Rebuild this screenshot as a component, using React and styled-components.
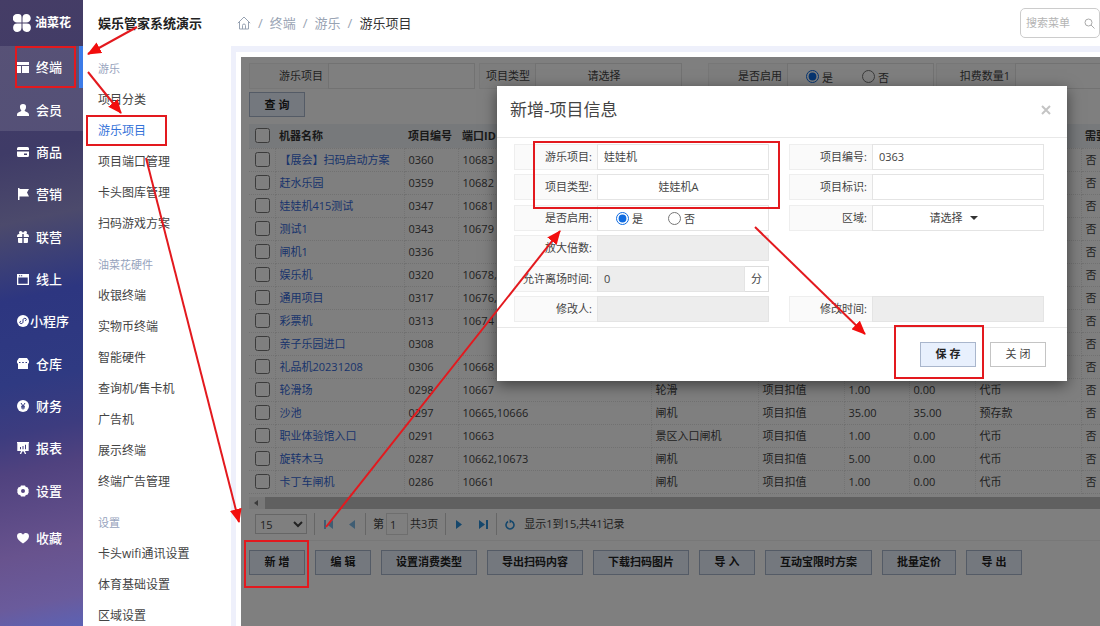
import React from 'react'
import styled, { createGlobalStyle, css } from 'styled-components'

const GlobalStyle = createGlobalStyle`
  * {
    box-sizing: border-box;
  }

  body {
    margin: 0;
    font-family: 'Open Sans', 'Noto Sans CJK SC', sans-serif;
    font-size: 11px;
    line-height: 16px;
    color: #444;
    background: #fff;
  }

  button, input, select {
    font: inherit;
    color: inherit;
    margin: 0;
  }

  a {
    color: inherit;
    text-decoration: none;
  }

  ul, h1, h2, h3 {
    margin: 0;
    padding: 0;
    list-style: none;
  }
`;

const Page = styled.div`
  position: relative;
  display: flex;
  height: 100vh;
  overflow: hidden;
`;

/* main navigation */

const Rail = styled.nav`
  flex: 0 0 83px;
  color: #fff;
  background: linear-gradient(
    168deg,
    #453d66 0%,
    #3f3b67 24%,
    #4c4a6c 35%,
    #2d3680 47%,
    #2f3a82 60%,
    #3d3c7f 68%,
    #50427f 74%,
    #68538e 87%,
    #6a5b9c 95%,
    #5c62b4 100%
  );
`;

const Logo = styled.div`
  display: flex;
  align-items: center;
  gap: 4px;
  height: 46px;
  padding-left: 13px;
  font-size: 12px;
  font-weight: 700;
`;

const RailList = styled.ul`
  display: flex;
  flex-direction: column;
  min-height: 466px;
`;

const RailItem = styled.li`
  flex: 1;
  display: flex;
  min-height: 42px;
  background: ${props => props.$lit ? 'rgba(255, 255, 255, 0.11)' : 'transparent'};
  border-right: 4px solid ${props => props.$active ? '#3c7be8' : 'transparent'};
  background-clip: ${props => props.$active ? 'padding-box' : 'border-box'};
`;

const RailLink = styled.a`
  flex: 1;
  display: flex;
  align-items: center;
  gap: ${props => props.$tight ? '1px' : '7px'};
  padding-left: 17px;
  font-size: 13px;
  font-weight: 500;
  white-space: nowrap;
`;

const Favourite = styled.div`
  display: flex;
  height: 42px;
  margin-top: 5px;
`;

/* second level menu */

const SubMenu = styled.nav`
  flex: 0 0 148px;
  padding-left: 15px;
  overflow: hidden;
  font-size: 12px;
  white-space: nowrap;
`;

const SystemName = styled.h1`
  height: 46px;
  margin-bottom: 7px;
  font-size: 13px;
  font-weight: 700;
  line-height: 46px;
  color: #222;
`;

const MenuGroup = styled.section`
  margin-bottom: 10px;
`;

const GroupTitle = styled.h2`
  font-size: 11px;
  font-weight: 400;
  line-height: 31px;
  color: #96a3bd;
`;

const MenuLink = styled.a`
  display: block;
  line-height: 31px;
  color: ${props => props.$active ? '#3573d9' : '#444'};
`;

/* content */

const Main = styled.main`
  flex: 1;
  min-width: 0;
  display: flex;
  flex-direction: column;
`;

const TopBar = styled.header`
  flex: 0 0 46px;
  display: flex;
  align-items: center;
  justify-content: space-between;
  padding-left: 6px;
`;

const Crumbs = styled.div`
  display: flex;
  align-items: center;
  gap: 7px;
  font-size: 13px;
  color: #98a3b3;

  strong {
    font-weight: 400;
    color: #333;
  }
`;

const SearchBox = styled.label`
  display: flex;
  align-items: center;
  width: 80px;
  height: 30px;
  padding: 0 4px 0 5px;
  border: 1px solid #ccc;
  border-radius: 5px;
  color: #aaa;

  input {
    flex: 1;
    min-width: 0;
    padding: 0;
    border: 0;
    outline: 0;
    background: none;
  }

  input::placeholder {
    color: #b4b4b4;
  }
`;

const Gutter = styled.div`
  flex: 1;
  display: flex;
  min-height: 0;
  padding: 6px 0 0 5px;
  background: #eef0fb;
`;

const Panel = styled.div`
  flex: 1;
  display: flex;
  min-width: 0;
  padding: 5px 0 0 5px;
  background: #fff;
`;

const Frame = styled.div`
  position: relative;
  flex: 1;
  min-width: 0;
  padding: 6px 0 0 8px;
  overflow: hidden;
`;

const Filters = styled.form`
  display: flex;
  height: 26px;
  margin-bottom: 3px;
`;

const FilterField = styled.div`
  flex: ${props => props.$grow ? '1 0 auto' : '0 0 auto'};
  display: flex;
  margin-right: ${props => props.$after || 0}px;
`;

const labelBox = css`
  flex: none;
  display: flex;
  align-items: center;
  justify-content: flex-end;
  padding-right: 5px;
  border: 1px solid #eee;
  border-right: 0;
  background: #fafafa;
  white-space: nowrap;
`;

const valueBox = css`
  border: 1px solid #e4e4e4;
  border-radius: 0;
  background: ${props => props.disabled ? '#ededed' : '#fff'};
  outline: 0;
`;

const FilterLabel = styled.label`
  ${labelBox}
  width: ${props => props.$narrow ? '56px' : '79px'};
`;

const FilterInput = styled.input`
  ${valueBox}
  width: 147px;
  padding: 0 6px;
`;

const DropButton = styled.button`
  ${valueBox}
  flex: ${props => props.$fill ? '1' : '0 0 147px'};
  display: flex;
  align-items: center;
  justify-content: center;
  gap: 7px;
  padding: 0 9px 0 0;
`;

const Caret = styled.span`
  border: 4px solid transparent;
  border-top-color: #333;
  border-bottom: 0;
`;

const RadioBox = styled.div`
  ${valueBox}
  flex: ${props => props.$fill ? '1' : '0 0 147px'};
  display: flex;
  align-items: center;
  gap: ${props => props.$fill ? '25px' : '29px'};
  padding: 3px 0 0 18px;

  label {
    display: flex;
    align-items: center;
    gap: 3px;
  }

  input {
    width: 13px;
    height: 13px;
    margin-bottom: 2px;
    accent-color: #0f6be0;
  }
`;

const Button = styled.button`
  flex: none;
  min-width: 56px;
  height: 25px;
  padding: 0 14px;
  border: 1px solid ${props => props.$plain ? '#c4c4c4' : '#a9b6cc'};
  border-radius: 0;
  background: ${props => props.$plain ? '#fff' : '#e8f0fd'};
  color: ${props => props.$plain ? '#444' : '#222'};
  font-weight: ${props => props.$plain ? 400 : 700};
  line-height: 22px;
  white-space: nowrap;
`;

const TableWrap = styled.div`
  margin-top: 7px;
  overflow: hidden;
`;

const Table = styled.table`
  width: 1000px;
  table-layout: fixed;
  border-collapse: collapse;

  th, td {
    height: 23px;
    padding: 0 4px;
    border-right: 1px dotted #e6e6e6;
    border-bottom: 1px dotted #e2e2e2;
    text-align: left;
    white-space: nowrap;
  }

  th {
    height: 24px;
    border-right: 0;
    background: #eff2f6;
    color: #333;
  }

  th:first-child, td:first-child {
    padding-left: 6px;
  }

  input {
    display: block;
    width: 15px;
    height: 15px;
  }

  a {
    color: #3468d8;
  }
`;

const ScrollBar = styled.div`
  display: flex;
  align-items: center;
  height: 12px;
  margin-top: 3px;
  background: #f1f1f1;

  i {
    margin: 0 7px 0 5px;
    border: 3px solid transparent;
    border-right: 4px solid #777;
    border-left: 0;
  }

  span {
    flex: 1;
    height: 12px;
    background: #c1c1c1;
  }
`;

const Pager = styled.div`
  display: flex;
  align-items: center;
  height: 32px;
  padding-left: 6px;
  border-bottom: 1px solid #f0f0f0;

  select {
    width: 52px;
    height: 20px;
    margin-right: 4px;
    border: 1px solid #ccc;
    background: #fff;
  }

  input {
    width: 22px;
    height: 22px;
    padding: 0 3px;
    border: 1px solid #ddd;
  }
`;

const PagerText = styled.span`
  display: flex;
  align-items: center;
  gap: 2px;
  padding: 0 4px;
`;

const Divider = styled.span`
  width: 1px;
  height: 22px;
  margin: 0 3px;
  background: #ccc;
`;

const PageButton = styled.button`
  display: flex;
  align-items: center;
  justify-content: center;
  width: 20px;
  height: 20px;
  padding: 0;
  border: 0;
  background: none;
  color: #2a8fd8;
  opacity: ${props => props.disabled ? 0.6 : 1};
`;

const PageNav = styled.div`
  display: flex;
  gap: 4px;
`;

const Actions = styled.div`
  display: flex;
  gap: 10px;
  margin-top: 9px;
`;

/* dialog */

const Overlay = styled.div`
  position: absolute;
  inset: 0;
  display: flex;
  justify-content: flex-end;
  align-items: flex-start;
  padding: 29px 33px 0 0;
  background: rgba(0, 0, 0, 0.5);
`;

const Dialog = styled.section`
  width: 570px;
  max-width: 100%;
  background: #fff;
  box-shadow: 0 4px 14px rgba(0, 0, 0, 0.5);
`;

const DialogHeader = styled.header`
  display: flex;
  align-items: center;
  justify-content: space-between;
  height: 52px;
  padding: 0 16px 4px 13px;
  border-bottom: 1px solid #e8e8e8;

  h3 {
    font-size: 17px;
    font-weight: 400;
    line-height: 24px;
  }
`;

const CloseButton = styled.button`
  display: flex;
  padding: 0;
  border: 0;
  background: none;
  color: #c4c4c4;
`;

const DialogForm = styled.form`
  display: grid;
  grid-template-columns: 1fr 1fr;
  grid-auto-rows: 26px;
  align-content: space-between;
  column-gap: 20px;
  min-height: 189px;
  padding: 6px 23px 5px 17px;
`;

const Field = styled.div`
  grid-column: ${props => props.$col};
  grid-row: ${props => props.$row};
  display: flex;
  min-width: 0;
`;

const FieldLabel = styled.label`
  ${labelBox}
  width: 83px;
`;

const FieldInput = styled.input`
  ${valueBox}
  flex: 1;
  min-width: 0;
  padding: 0 6px;
`;

const Unit = styled.span`
  width: 24px;
  border: 1px solid #ddd;
  border-left: 0;
  line-height: 24px;
  text-align: center;
`;

const DialogFooter = styled.footer`
  display: flex;
  align-items: center;
  justify-content: flex-end;
  gap: 14px;
  height: 54px;
  padding: 0 21px 1px 0;
  border-top: 1px solid #e8e8e8;
`;

const Marks = styled.svg`
  position: absolute;
  top: 0;
  left: 0;
  pointer-events: none;
`;

const icons = {
  terminal: <path d="M0 1h12v3H0zM0 5h4v7H0zM5 5h7v7H5z" />,
  member: <path d="M6 0a3 3 0 0 1 3 3.300C9 5 8 6 7.600 6.800c0 .8 4.400 1.200 4.400 4V12H0v-1.200C0 8 4.400 7.600 4.400 6.800 4 6 3 5 3 3.300A3 3 0 0 1 6 0z" />,
  goods: <path fillRule="evenodd" d="M1.500 1h9A1.500 1.500 0 0 1 12 2.500V4H0V2.500A1.500 1.500 0 0 1 1.500 1zM0 5.500h12v4a1.500 1.500 0 0 1-1.500 1.500h-9A1.500 1.500 0 0 1 0 9.500zM7 7.500V9h3V7.500z" />,
  flag: <path d="M1 0h1.500v1H12L10 4.500 12 8.500H2.500V12H1z" />,
  gift: <path d="M3.500 0C5 0 5.500 1 6 2c.5-1 1-2 2.500-2C10 0 10.500 2 9.500 3H10c1.500 0 2 1 2 3H6.700V3H5.300v3H0c0-2 .5-3 2-3h.5C1.500 2 2 0 3.500 0zM1 7h4.300v5H2.500C1.500 12 1 11.500 1 10.500zM6.700 7H11v3.500c0 1-.5 1.500-1.500 1.500H6.700z" />,
  online: <path fillRule="evenodd" d="M0 1h12v11H0zM1.300 4.500v6.200h9.400V4.500zM2 2.200v1h1.200v-1zM4 2.200v1h1.200v-1z" />,
  mini: (
    <>
      <circle cx="6" cy="6" r="6" />
      <path d="M3.800 8.600c-1.600-.3-1.300-2.300.3-2.400M4 8.600c1.200 0 2-.7 2-1.700V5c0-1 .8-1.700 2-1.700 1.700.1 1.800 2.200.2 2.400" fill="none" stroke="#2d3680" />
    </>
  ),
  store: <path fillRule="evenodd" d="M2 0h8l2 3v1.500c0 .6-.4 1-1 1.200V11H1V5.700C.4 5.500 0 5.100 0 4.500V3zM2 4v1h1.500V4zM5.200 4v1h1.600V4zM8.500 4v1H10V4z" />,
  money: (
    <>
      <circle cx="6" cy="6" r="6" />
      <path d="M4 3l2 3 2-3M6 6v3.500M4 6.300h4M4 7.900h4" fill="none" stroke="#333b80" />
    </>
  ),
  report: <path fillRule="evenodd" d="M0 0h12v1.200h-.3V9H8l1.200 3H7.800l-1-2.500H5.200L4.200 12H2.800L4 9H.3V1.200H0zM3 5v2.200h1V5zM5.500 4v3.200h1V4zM8 2.800v4.400h1V2.800z" />,
  setting: <path fillRule="evenodd" d="M4 .5h4l.8 1.600 1.700.2 1.500 3L11 6l1 .8-1.500 3-1.700.2L8 11.500H4L3.200 10l-1.700-.2L0 6.800 1 6l-1-.7 1.500-3 1.700-.2zM6 4a2 2 0 1 0 0 4 2 2 0 0 0 0-4z" />,
  heart: <path d="M6 11.500C2.500 8.800 0 7 0 4.200 0 2.200 1.400 1 3.100 1 4.300 1 5.400 1.600 6 2.700 6.600 1.600 7.700 1 8.900 1 10.600 1 12 2.200 12 4.200c0 2.800-2.500 4.600-6 7.300z" />,
}

const Icon = ({ name }) => (
  <svg width="12" height="12" viewBox="0 0 12 12" fill="currentColor" aria-hidden="true">
    {icons[name]}
  </svg>
)

const railItems = [
  { icon: 'terminal', text: '终端', lit: true, active: true },
  { icon: 'member', text: '会员', lit: true },
  { icon: 'goods', text: '商品' },
  { icon: 'flag', text: '营销' },
  { icon: 'gift', text: '联营' },
  { icon: 'online', text: '线上' },
  { icon: 'mini', text: '小程序', tight: true },
  { icon: 'store', text: '仓库' },
  { icon: 'money', text: '财务' },
  { icon: 'report', text: '报表' },
  { icon: 'setting', text: '设置' },
]

const menuGroups = [
  { title: '游乐', items: ['项目分类', '游乐项目', '项目端口管理', '卡头图库管理', '扫码游戏方案'] },
  { title: '油菜花硬件', items: ['收银终端', '实物币终端', '智能硬件', '查询机/售卡机', '广告机', '展示终端', '终端广告管理'] },
  { title: '设置', items: ['卡头wifi通讯设置', '体育基础设置', '区域设置'] },
]

const columnWidths = [26, 129, 54, 193, 107, 86, 65, 66, 106, 168]

const rows = [
  ['【展会】扫码启动方案', '0360', '10683'],
  ['赶水乐园', '0359', '10682'],
  ['娃娃机415测试', '0347', '10681'],
  ['测试1', '0343', '10679'],
  ['闸机1', '0336', ''],
  ['娱乐机', '0320', '10678,'],
  ['通用项目', '0317', '10676,'],
  ['彩票机', '0313', '10674'],
  ['亲子乐园进口', '0308', ''],
  ['礼品机20231208', '0306', '10668'],
  ['轮滑场', '0298', '10667', '轮滑', '项目扣值', '1.00', '0.00', '代币'],
  ['沙池', '0297', '10665,10666', '闸机', '项目扣值', '35.00', '35.00', '预存款'],
  ['职业体验馆入口', '0291', '10663', '景区入口闸机', '项目扣值', '1.00', '0.00', '代币'],
  ['旋转木马', '0287', '10662,10673', '闸机', '项目扣值', '5.00', '0.00', '代币'],
  ['卡丁车闸机', '0286', '10661', '闸机', '项目扣值', '1.00', '0.00', '代币'],
]

const actions = ['新 增', '编 辑', '设置消费类型', '导出扫码内容', '下载扫码图片', '导 入', '互动宝限时方案', '批量定价', '导 出']

const boxes = [
  [16, 47, 59, 40],
  [87, 116, 79, 29],
  [534, 142, 245, 66],
  [895, 326, 88, 52],
  [245, 541, 63, 46],
]

const arrows = [
  [137, 27, 88, 54],
  [88, 72, 121, 113],
  [146, 158, 239, 522],
  [326, 527, 560, 231],
  [755, 227, 865, 334],
]

const SideRail = () => (
  <Rail>
    <Logo>
      <svg width="18" height="18" viewBox="0 0 18 18" fill="#fff" aria-hidden="true">
        <path d="M4 0h1.500Q8.500 0 8.500 3v5.500H4A4 4 0 0 1 4 0zM13.500 0a4.200 4.200 0 0 1 0 8.500h-4V4a4 4 0 0 1 4-4zM4.200 9.500h4.300v4.300A4.200 4.200 0 1 1 4.200 9.500zM9.500 9.500h4.300a4.200 4.200 0 1 1-4.300 4.300z" />
      </svg>
      油菜花
    </Logo>
    <RailList>
      {railItems.map(item => (
        <RailItem key={item.text} $lit={item.lit} $active={item.active}>
          <RailLink href="#" $tight={item.tight}>
            <Icon name={item.icon} />
            {item.text}
          </RailLink>
        </RailItem>
      ))}
    </RailList>
    <Favourite>
      <RailLink href="#">
        <Icon name="heart" />
        收藏
      </RailLink>
    </Favourite>
  </Rail>
)

const SideMenu = () => (
  <SubMenu>
    <SystemName>娱乐管家系统演示</SystemName>
    {menuGroups.map(group => (
      <MenuGroup key={group.title}>
        <GroupTitle>{group.title}</GroupTitle>
        {group.items.map(item => (
          <MenuLink key={item} href="#" $active={item === '游乐项目'}>{item}</MenuLink>
        ))}
      </MenuGroup>
    ))}
  </SubMenu>
)

const Header = () => (
  <TopBar>
    <Crumbs>
      <svg width="14" height="14" viewBox="0 0 14 14" fill="none" stroke="currentColor" aria-hidden="true">
        <path d="M.8 7.200L7 1l6.200 6.200M2.500 6v7h9V6M5.500 13V9.500a1.500 1.500 0 0 1 3 0V13" />
      </svg>
      <span>/</span>
      <a href="#">终端</a>
      <span>/</span>
      <a href="#">游乐</a>
      <span>/</span>
      <strong>游乐项目</strong>
    </Crumbs>
    <SearchBox>
      <input type="text" placeholder="搜索菜单" aria-label="搜索菜单" />
      <svg width="11" height="11" viewBox="0 0 11 11" fill="none" stroke="currentColor" aria-hidden="true">
        <circle cx="4.500" cy="4.500" r="3.500" />
        <path d="M7 7l3.500 3.500" />
      </svg>
    </SearchBox>
  </TopBar>
)

const YesNo = ({ name, fill }) => (
  <RadioBox $fill={fill} role="radiogroup" aria-label="是否启用">
    <label><input type="radio" name={name} defaultChecked />是</label>
    <label><input type="radio" name={name} />否</label>
  </RadioBox>
)

const FilterBar = () => (
  <>
    <Filters>
      <FilterField $after={4}>
        <FilterLabel htmlFor="f-item">游乐项目</FilterLabel>
        <FilterInput id="f-item" />
      </FilterField>
      <FilterField $after={26}>
        <FilterLabel $narrow htmlFor="f-type">项目类型</FilterLabel>
        <DropButton id="f-type" type="button">请选择</DropButton>
      </FilterField>
      <FilterField $after={2}>
        <FilterLabel as="span">是否启用</FilterLabel>
        <YesNo name="f-enabled" />
      </FilterField>
      <FilterField $grow>
        <FilterLabel htmlFor="f-count">扣费数量1</FilterLabel>
        <FilterInput id="f-count" />
      </FilterField>
    </Filters>
    <Button type="button">查 询</Button>
  </>
)

const ItemTable = () => (
  <TableWrap>
    <Table>
      <colgroup>
        {columnWidths.map((width, i) => <col key={i} style={{ width }} />)}
      </colgroup>
      <thead>
        <tr>
          <th><input type="checkbox" aria-label="全选" /></th>
          <th>机器名称</th>
          <th>项目编号</th>
          <th>端口ID</th>
          <th colSpan="5" />
          <th>需要</th>
        </tr>
      </thead>
      <tbody>
        {rows.map(([name, code, port, type, mode, count, limit, coin]) => (
          <tr key={code}>
            <td><input type="checkbox" aria-label={name} /></td>
            <td><a href="#">{name}</a></td>
            <td>{code}</td>
            <td>{port}</td>
            <td>{type}</td>
            <td>{mode}</td>
            <td>{count}</td>
            <td>{limit}</td>
            <td>{coin}</td>
            <td>否</td>
          </tr>
        ))}
      </tbody>
    </Table>
    <ScrollBar><i /><span /></ScrollBar>
  </TableWrap>
)

const Pagination = () => (
  <Pager>
    <select aria-label="每页条数" defaultValue="15">
      <option>15</option>
      <option>30</option>
    </select>
    <Divider />
    <PageNav>
      <PageButton disabled aria-label="首页">
        <svg width="9" height="9" viewBox="0 0 9 9" fill="currentColor"><path d="M0 0h2v9H0zM9 0v9L3 4.500z" /></svg>
      </PageButton>
      <PageButton disabled aria-label="上一页">
        <svg width="6" height="9" viewBox="0 0 6 9" fill="currentColor"><path d="M6 0v9L0 4.500z" /></svg>
      </PageButton>
    </PageNav>
    <Divider />
    <PagerText>
      <label htmlFor="page-no">第</label>
      <input id="page-no" defaultValue="1" />
      <span>共3页</span>
    </PagerText>
    <Divider />
    <PageNav>
      <PageButton aria-label="下一页">
        <svg width="6" height="9" viewBox="0 0 6 9" fill="currentColor"><path d="M0 0v9l6-4.500z" /></svg>
      </PageButton>
      <PageButton aria-label="末页">
        <svg width="9" height="9" viewBox="0 0 9 9" fill="currentColor"><path d="M0 0v9l6-4.500zM7 0h2v9H7z" /></svg>
      </PageButton>
    </PageNav>
    <Divider />
    <PageButton aria-label="刷新">
      <svg width="10" height="11" viewBox="0 0 10 11" fill="none" stroke="currentColor" strokeWidth="1.600">
        <path d="M3 2.500a4 4 0 1 0 4 0" />
        <path d="M4.500.3l3.200 1.900-3 2z" fill="currentColor" stroke="none" />
      </svg>
    </PageButton>
    <PagerText>显示1到15,共41记录</PagerText>
  </Pager>
)

const ItemDialog = () => (
  <Dialog role="dialog" aria-label="新增-项目信息">
    <DialogHeader>
      <h3>新增-项目信息</h3>
      <CloseButton aria-label="关闭窗口">
        <svg width="10" height="10" viewBox="0 0 10 10" stroke="currentColor" strokeWidth="2">
          <path d="M1 1l8 8M9 1l-8 8" />
        </svg>
      </CloseButton>
    </DialogHeader>
    <DialogForm>
      <Field $col={1} $row={1}>
        <FieldLabel htmlFor="d-item">游乐项目:</FieldLabel>
        <FieldInput id="d-item" defaultValue="娃娃机" />
      </Field>
      <Field $col={2} $row={1}>
        <FieldLabel htmlFor="d-code">项目编号:</FieldLabel>
        <FieldInput id="d-code" defaultValue="0363" />
      </Field>
      <Field $col={1} $row={2}>
        <FieldLabel htmlFor="d-type">项目类型:</FieldLabel>
        <DropButton $fill id="d-type" type="button">娃娃机A</DropButton>
      </Field>
      <Field $col={2} $row={2}>
        <FieldLabel htmlFor="d-mark">项目标识:</FieldLabel>
        <FieldInput id="d-mark" />
      </Field>
      <Field $col={1} $row={3}>
        <FieldLabel as="span">是否启用:</FieldLabel>
        <YesNo fill name="d-enabled" />
      </Field>
      <Field $col={2} $row={3}>
        <FieldLabel htmlFor="d-area">区域:</FieldLabel>
        <DropButton $fill id="d-area" type="button">请选择<Caret /></DropButton>
      </Field>
      <Field $col={1} $row={4}>
        <FieldLabel htmlFor="d-times">放大倍数:</FieldLabel>
        <FieldInput id="d-times" disabled />
      </Field>
      <Field $col={1} $row={5}>
        <FieldLabel htmlFor="d-leave">允许离场时间:</FieldLabel>
        <FieldInput id="d-leave" defaultValue="0" disabled />
        <Unit>分</Unit>
      </Field>
      <Field $col={1} $row={6}>
        <FieldLabel htmlFor="d-editor">修改人:</FieldLabel>
        <FieldInput id="d-editor" disabled />
      </Field>
      <Field $col={2} $row={6}>
        <FieldLabel htmlFor="d-time">修改时间:</FieldLabel>
        <FieldInput id="d-time" disabled />
      </Field>
    </DialogForm>
    <DialogFooter>
      <Button type="button">保 存</Button>
      <Button type="button" $plain>关 闭</Button>
    </DialogFooter>
  </Dialog>
)

// step by step guide drawn over the page
const Guide = () => (
  <Marks width="1100" height="626" fill="none" stroke="#e3191e" strokeWidth="2" aria-hidden="true">
    <defs>
      <marker id="head" markerUnits="userSpaceOnUse" markerWidth="14" markerHeight="12" refX="13" refY="6" orient="auto">
        <path d="M0 0l14 6-14 6z" fill="#f20d0d" stroke="none" />
      </marker>
    </defs>
    {boxes.map(([x, y, width, height]) => (
      <rect key={`${x}-${y}`} x={x} y={y} width={width} height={height} />
    ))}
    {arrows.map(([x1, y1, x2, y2]) => (
      <line key={`${x1}-${y1}`} x1={x1} y1={y1} x2={x2} y2={y2} markerEnd="url(#head)" />
    ))}
  </Marks>
)

const App = () => (
  <>
    <GlobalStyle />
    <Page>
      <SideRail />
      <SideMenu />
      <Main>
        <Header />
        <Gutter>
          <Panel>
            <Frame>
              <FilterBar />
              <ItemTable />
              <Pagination />
              <Actions>
                {actions.map(text => <Button key={text} type="button">{text}</Button>)}
              </Actions>
              <Overlay>
                <ItemDialog />
              </Overlay>
            </Frame>
          </Panel>
        </Gutter>
      </Main>
      <Guide />
    </Page>
  </>
)

export default App
